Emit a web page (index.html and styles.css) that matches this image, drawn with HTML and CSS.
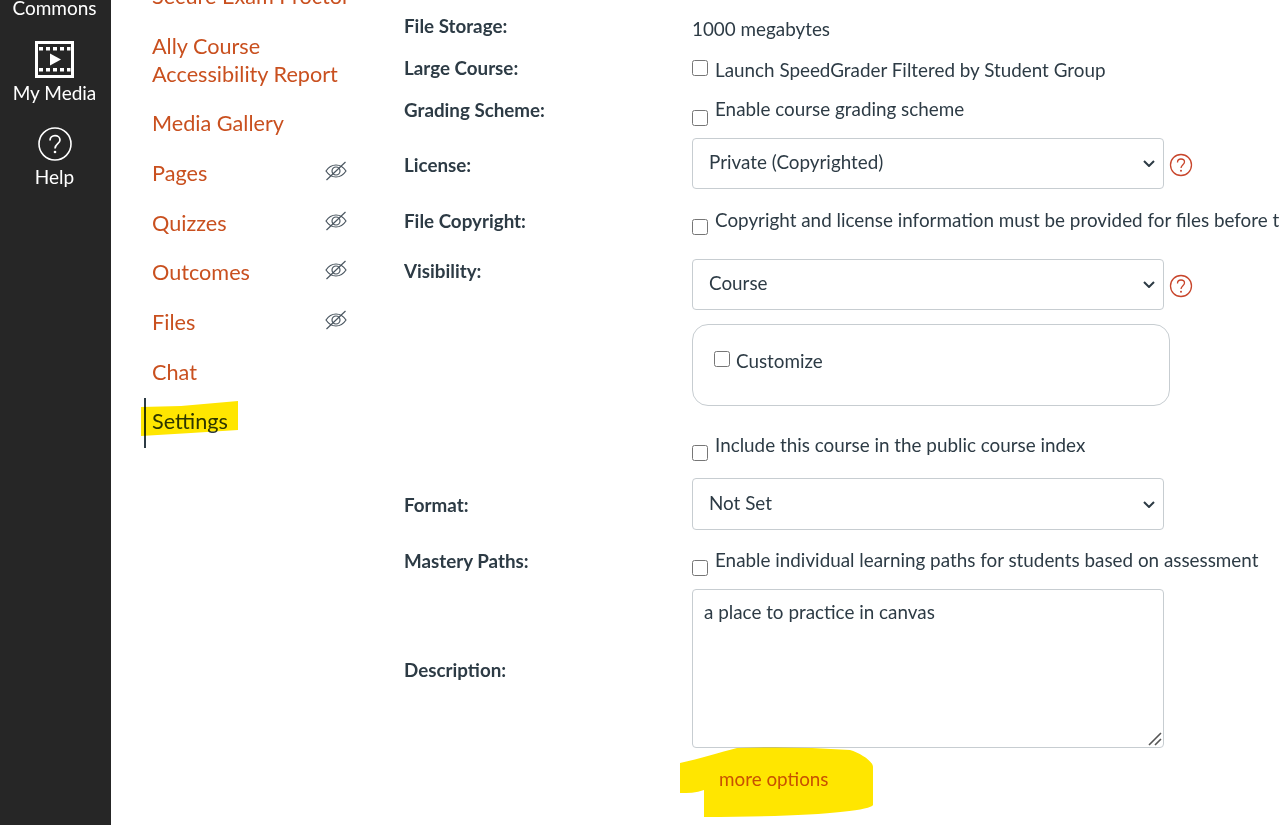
FILE: index.html
```html
<!DOCTYPE html>
<html>
<head>
<meta name="viewport" content="width=device-width, initial-scale=1">
<link rel="stylesheet" href="styles.css">
</head>
<body>

<div class="global-nav">
  <div class="global-label commons">Commons</div>
  <svg class="media-icon" width="39" height="37" viewBox="0 0 39 37">
    <rect x="1.5" y="1.5" width="36" height="34" fill="none" stroke="#fff" stroke-width="3"/>
    <g fill="#fff">
      <rect x="4" y="6" width="4" height="3.5"/><rect x="11" y="6" width="4" height="3.5"/><rect x="18" y="6" width="4" height="3.5"/><rect x="25" y="6" width="4" height="3.5"/><rect x="32" y="6" width="3.5" height="3.5"/>
      <rect x="4" y="27" width="4" height="3.5"/><rect x="11" y="27" width="4" height="3.5"/><rect x="18" y="27" width="4" height="3.5"/><rect x="25" y="27" width="4" height="3.5"/><rect x="32" y="27" width="3.5" height="3.5"/>
      <path d="M15 12.5 L26 18.5 L15 24.5 Z"/>
    </g>
  </svg>
  <div class="global-label">My Media</div>
  <svg class="help-icon" width="34" height="34" viewBox="0 0 34 34">
    <circle cx="17" cy="17" r="16" fill="none" stroke="#fff" stroke-width="1.6"/>
    <path d="M12 13.5 C12 10.5 14.2 8.7 17 8.7 C19.8 8.7 22 10.5 22 13 C22 16.5 17 17 17 21.5" fill="none" stroke="#fff" stroke-width="1.7"/>
    <circle cx="17" cy="25" r="1.3" fill="#fff"/>
  </svg>
  <div class="global-label">Help</div>
</div>

<ul class="course-nav">
  <li><a>Secure Exam Proctor</a></li>
  <li><a>Ally Course<br>Accessibility Report</a></li>
  <li><a>Media Gallery</a></li>
  <li><a>Pages</a><svg class="eye" width="22" height="20" viewBox="0 0 22 20"><use href="#eye-off"/></svg></li>
  <li><a>Quizzes</a><svg class="eye" width="22" height="20" viewBox="0 0 22 20"><use href="#eye-off"/></svg></li>
  <li><a>Outcomes</a><svg class="eye" width="22" height="20" viewBox="0 0 22 20"><use href="#eye-off"/></svg></li>
  <li><a>Files</a><svg class="eye" width="22" height="20" viewBox="0 0 22 20"><use href="#eye-off"/></svg></li>
  <li><a>Chat</a></li>
  <li class="active"><a>Settings</a></li>
</ul>

<svg class="sprite" width="0" height="0">
  <symbol id="eye-off" viewBox="0 0 22 20">
    <path d="M1 10 C4 5.5 7.5 4 11 4 C14.5 4 18 5.5 21 10 C18 14.5 14.5 16 11 16 C7.5 16 4 14.5 1 10 Z" fill="none" stroke="#4a5660" stroke-width="1.2"/>
    <circle cx="11" cy="10" r="4" fill="none" stroke="#4a5660" stroke-width="1.2"/>
    <path d="M1.5 19 L20.5 1" stroke="#4a5660" stroke-width="1.2"/>
  </symbol>
  <symbol id="hint-icon" viewBox="0 0 24 24">
    <circle cx="12" cy="12" r="10.5" fill="none" stroke="#c8452b" stroke-width="1.3"/>
    <path d="M8.5 9.5 C8.5 7.3 10 6 12 6 C14 6 15.5 7.3 15.5 9 C15.5 11.5 12 12 12 15" fill="none" stroke="#c8452b" stroke-width="1.3"/>
    <circle cx="12" cy="17.8" r="1" fill="#c8452b"/>
  </symbol>
</svg>

<form class="settings-form">
  <div class="row row-storage">
    <label>File Storage:</label>
    <div class="value">1000 megabytes</div>
  </div>
  <div class="row row-large">
    <label>Large Course:</label>
    <div class="value check"><input type="checkbox"><span>Launch SpeedGrader Filtered by Student Group</span></div>
  </div>
  <div class="row row-grading">
    <label>Grading Scheme:</label>
    <div class="value check low"><input type="checkbox"><span>Enable course grading scheme</span></div>
  </div>
  <div class="row row-license">
    <label>License:</label>
    <div class="value">
      <div class="with-help">
        <select><option>Private (Copyrighted)</option></select>
        <svg class="hint" width="24" height="24" viewBox="0 0 24 24"><use href="#hint-icon"/></svg>
      </div>
    </div>
  </div>
  <div class="row row-copyright">
    <label>File Copyright:</label>
    <div class="value check low"><input type="checkbox"><span class="nowrap">Copyright and license information must be provided for files before they can be published.</span></div>
  </div>
  <div class="row row-visibility">
    <label>Visibility:</label>
    <div class="value">
      <div class="with-help">
        <select><option>Course</option></select>
        <svg class="hint" width="24" height="24" viewBox="0 0 24 24"><use href="#hint-icon"/></svg>
      </div>
      <div class="customize"><input type="checkbox"><span>Customize</span></div>
      <div class="check low public-index"><input type="checkbox"><span>Include this course in the public course index</span></div>
    </div>
  </div>
  <div class="row row-format">
    <label>Format:</label>
    <div class="value"><select class="tall"><option>Not Set</option></select></div>
  </div>
  <div class="row row-mastery">
    <label>Mastery Paths:</label>
    <div class="value check low"><input type="checkbox"><span>Enable individual learning paths for students based on assessment</span></div>
  </div>
  <div class="row row-description">
    <label>Description:</label>
    <div class="value">
      <div class="textarea-wrap">
        <textarea>a place to practice in canvas</textarea>
        <svg class="grip" width="14" height="14" viewBox="0 0 14 14">
          <path d="M1 13 L13 1 M7 13 L13 7" stroke="#555" stroke-width="1.6"/>
        </svg>
      </div>
    </div>
  </div>
  <div class="more"><a>more options</a></div>
</form>

<!-- yellow marker strokes drawn on top of the page -->
<svg class="marker marker-settings" width="98" height="36" viewBox="0 0 98 36">
  <path d="M0 6 L40 5 L97 0 L97 29 L50 32 L0 35 Z" fill="#ffe600"/>
</svg>
<svg class="marker marker-more" width="196" height="72" viewBox="0 0 196 72">
  <path d="M0 16 C20 12 40 5 57 1 C90 0 130 0 170 3 C180 6 193 14 193 20 L193 58 C190 64 130 70 24 70 L24 43 C16 46 8 46 0 46 Z" fill="#ffe600"/>
</svg>

</body>
</html>
```

FILE: styles.css
```css
html, body {
  margin: 0;
  height: 825px;
  overflow: hidden;
}

body {
  display: flex;
  background-color: #fff;
  color: #2d3b45;
  font-family: Lato, "Open Sans", sans-serif;
  position: relative;
}

.sprite {
  display: none;
}

/* Dark strip on the left */
.global-nav {
  width: 111px;
  box-sizing: border-box;
  padding-right: 2px;
  flex: none;
  background-color: #262626;
  color: #fff;
  display: flex;
  flex-direction: column;
  align-items: center;
}

.global-label {
  font-size: 19px;
  line-height: 24px;
}

.commons {
  margin-top: -4px;
}

.media-icon {
  margin-top: 21px;
  margin-bottom: 3px;
}

.help-icon {
  margin-top: 22px;
  margin-bottom: 4px;
}

/* Course menu */
.course-nav {
  list-style: none;
  margin: -18px 0 0 33px;
  padding: 0;
  width: 203px;
  flex: none;
  font-size: 21.65px;
  line-height: 28px;
}

.course-nav li {
  display: flex;
  justify-content: space-between;
  align-items: center;
  margin-bottom: 21.7px;
  padding-left: 8px;
  color: #c9501f;
  white-space: nowrap;
}

.course-nav li.active {
  position: relative;
  color: #2d3b45;
}

.course-nav li.active a {
  margin-top: -1px;
}

.course-nav li.active:before {
  content: "";
  position: absolute;
  left: 0;
  top: -10px;
  width: 2px;
  height: 50px;
  background-color: #2d3b45;
}

.eye {
  display: block;
  margin-top: -4px;
}

/* Settings form */
.settings-form {
  margin-left: 57px;
  width: 876px;
  flex: none;
  font-size: 18.85px;
  line-height: 24px;
}

.row {
  display: flex;
}

.row label {
  width: 288px;
  flex: none;
  font-weight: bold;
  font-size: 18.8px;
}

.value {
  flex: none;
  width: 588px;
}

.row-storage { height: 42px; padding-top: 14px; padding-bottom: 1px; }
.row-storage .value { padding-top: 3px; }
.row-large { height: 41px; }
.row-large label { margin-top: -1px; }
.row-grading { height: 29px; }
.row-license { height: 82px; }
.row-license label { padding-top: 26px; }
.row-license .with-help { margin-top: 11px; }
.row-copyright { height: 50px; }
.row-visibility { height: 219px; }
.row-format { height: 71px; }
.row-format label { padding-top: 15px; }
.row-mastery { height: 40px; }
.row-description { height: 158px; }
.row-description label { padding-top: 69px; }

.check {
  display: flex;
  align-items: flex-start;
}

.check input,
.customize input {
  width: 16px;
  height: 16px;
  margin: 0 7px 0 0;
  flex: none;
  accent-color: #2d3b45;
}

.check.low input {
  margin-top: 12px;
}

.check.low span {
  margin-top: -1px;
}

.row-copyright .check.low input {
  margin-top: 10px;
}

.row-mastery .check.low input,
.public-index.check.low input {
  margin-top: 11px;
}

.row-large .check input {
  margin-top: 3px;
}

.row-large .check span {
  padding-top: 1px;
}

.nowrap {
  white-space: nowrap;
}

.with-help {
  display: flex;
  align-items: center;
}

/* Native arrow swapped for the thicker chevron */
select {
  appearance: none;
  box-sizing: border-box;
  width: 472px;
  height: 51px;
  padding: 0 30px 4px 16px;
  border: 1px solid #c7cdd1;
  border-radius: 4px;
  background-color: #fff;
  background-image: url("data:image/svg+xml,%3Csvg xmlns='http://www.w3.org/2000/svg' width='12' height='7' viewBox='0 0 12 7'%3E%3Cpath d='M1 1 L6 6 L11 1' fill='none' stroke='%232d3b45' stroke-width='2'/%3E%3C/svg%3E");
  background-repeat: no-repeat;
  background-position: right 8px center;
  color: #2d3b45;
  font-family: inherit;
  font-size: 18.85px;
}

select.tall {
  height: 52px;
}

.hint {
  margin-left: 5px;
  margin-top: 3px;
}

.customize {
  margin-top: 14px;
  box-sizing: border-box;
  width: 478px;
  height: 82px;
  padding: 26px 21px;
  border: 1px solid #c7cdd1;
  border-radius: 16px;
  display: flex;
  align-items: flex-start;
}

.customize input {
  margin-right: 6px;
}

.customize span {
  margin-top: -2px;
}

.public-index {
  margin-top: 28px;
}

.textarea-wrap {
  position: relative;
  width: 472px;
}

textarea {
  display: block;
  box-sizing: border-box;
  width: 472px;
  height: 159px;
  padding: 10px 11px;
  border: 1px solid #c7cdd1;
  border-radius: 4px;
  resize: none;
  color: #2d3b45;
  font-family: inherit;
  font-size: 18.85px;
  line-height: 24px;
}

.grip {
  position: absolute;
  right: 2px;
  bottom: 2px;
}

.more {
  margin-top: 20px;
  margin-left: 315px;
  color: #c85a1f;
  font-size: 18.85px;
}

/* Marker strokes sit over the page and tint what is below */
.marker {
  position: absolute;
  mix-blend-mode: multiply;
}

.marker-settings {
  left: 141px;
  top: 401px;
}

.marker-more {
  left: 680px;
  top: 747px;
}
```
